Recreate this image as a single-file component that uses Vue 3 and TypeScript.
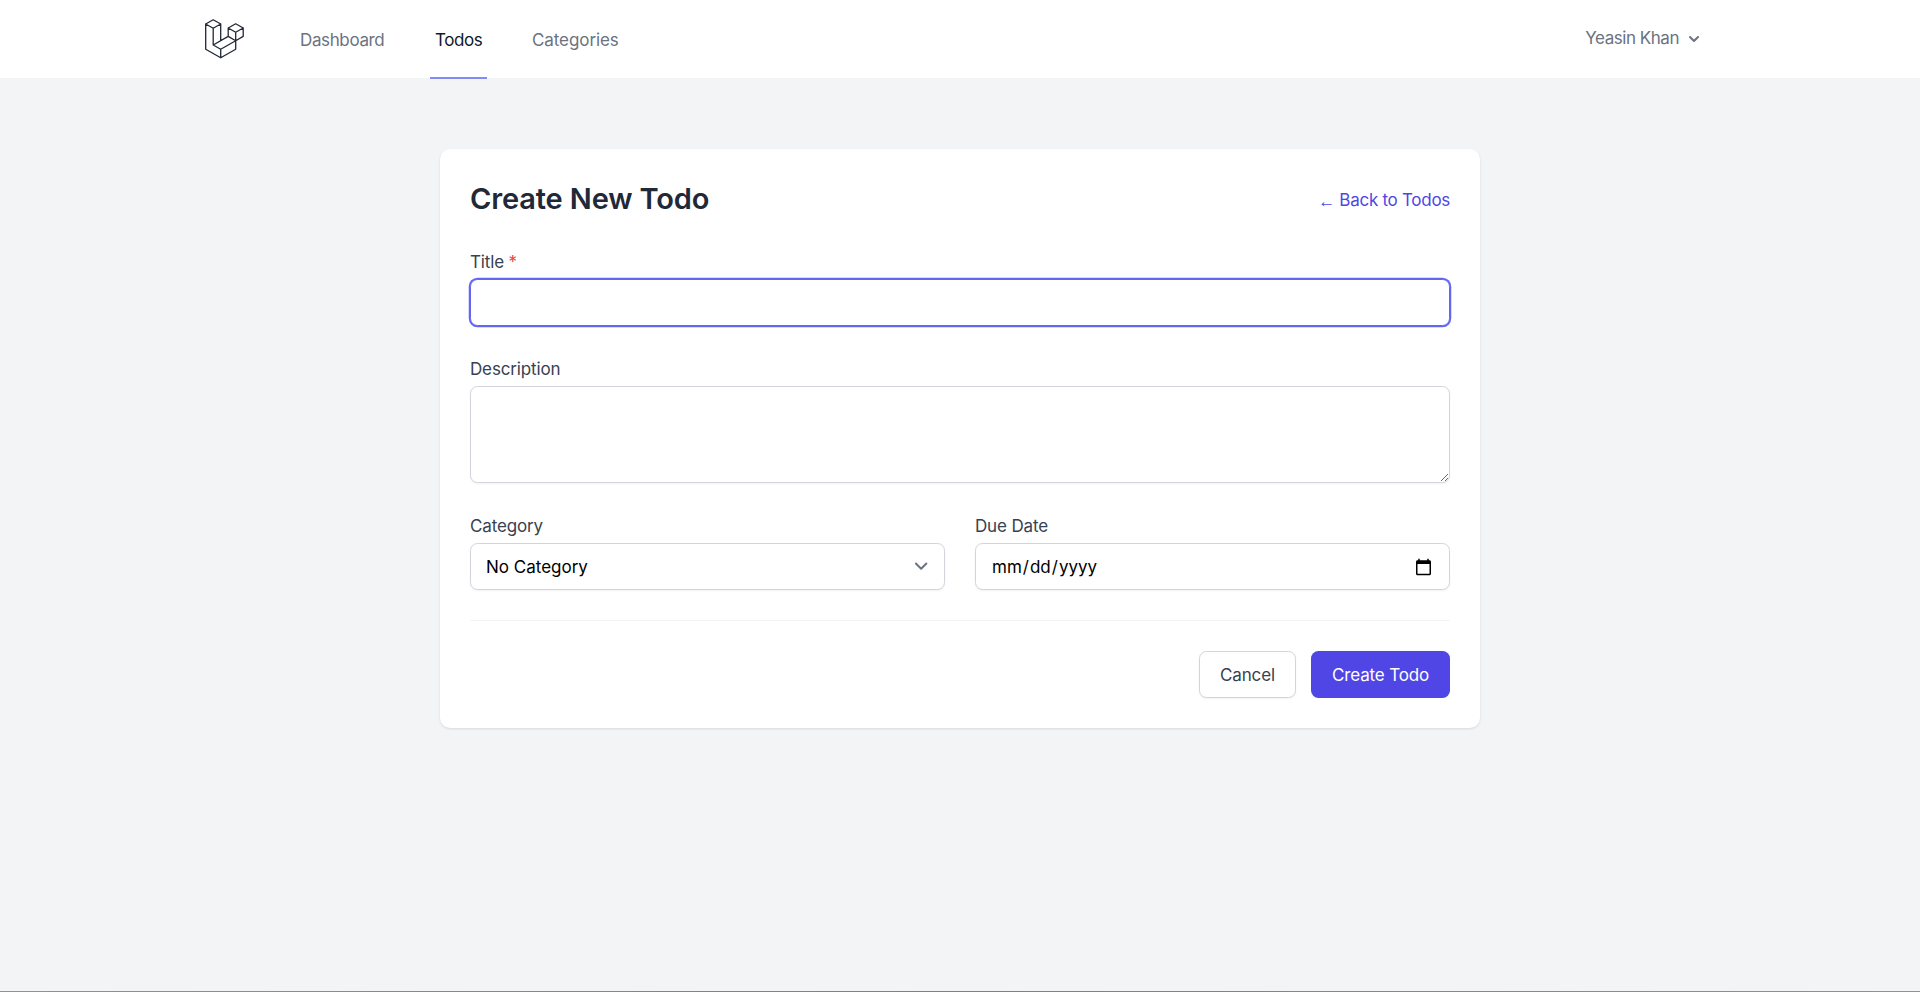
<script setup lang="ts">
import { ref } from 'vue'

interface NavLink {
  label: string
  key: string
  active: boolean
}

const links: NavLink[] = [
  { label: 'Dashboard', key: 'dashboard', active: false },
  { label: 'Todos', key: 'todos', active: true },
  { label: 'Categories', key: 'categories', active: false },
]

const title = ref('')
const description = ref('')
const category = ref('')
const dueDate = ref('')
</script>

<template>
  <div class="page">
    <nav class="nav">
      <div class="nav-left">
        <a class="logo" href="#">
          <svg width="40" height="40" viewBox="0 0 40 40" fill="none" stroke="#1f2937" stroke-width="1.3" stroke-linejoin="round" stroke-linecap="round">
            <path d="M8.2 0.8 15.7 5 8.2 9.2 0.7 5ZM0.7 5V30.2L15.7 38.8 30.7 30.2V21.8M8.2 9.2V26L15.7 30.2V38.8M15.7 30.2 30.7 21.8M15.7 5V21.8M8.2 26 23.2 17.4 30.7 21.8 38.2 17.4V9M23.2 17.4V9L30.7 4.8 38.2 9 30.7 13.2V21.8M23.2 9 30.7 13.2" />
          </svg>
        </a>
        <div class="links">
          <a v-for="link in links" :key="link.key" href="#" class="link" :class="[link.key, { active: link.active }]">{{ link.label }}</a>
        </div>
      </div>
      <button class="user" type="button">
        <span class="user-name">Yeasin Khan</span>
        <svg width="20" height="20" viewBox="0 0 20 20" fill="currentColor">
          <path fill-rule="evenodd" clip-rule="evenodd" d="M5.293 7.293a1 1 0 011.414 0L10 10.586l3.293-3.293a1 1 0 111.414 1.414l-4 4a1 1 0 01-1.414 0l-4-4a1 1 0 010-1.414z" />
        </svg>
      </button>
    </nav>

    <main class="card">
      <header class="card-head">
        <h2>Create New Todo</h2>
        <a href="#" class="back"><span class="arrow">←</span><span>Back to Todos</span></a>
      </header>

      <form class="form" @submit.prevent>
        <div class="field">
          <label for="title">Title <span class="required">*</span></label>
          <input id="title" v-model="title" class="control focused" type="text" />
        </div>
        <div class="field">
          <label for="description">Description</label>
          <textarea id="description" v-model="description" class="control area"></textarea>
        </div>
        <div class="pair">
          <div class="field">
            <label for="category">Category</label>
            <div class="select-wrap">
              <select id="category" v-model="category" class="control">
                <option value="">No Category</option>
              </select>
              <svg class="select-arrow" width="26.25" height="26.25" viewBox="0 0 20 20" fill="none" stroke="#6b7280" stroke-width="1.5" stroke-linecap="round" stroke-linejoin="round">
                <path d="M6 8l4 4 4-4" />
              </svg>
            </div>
          </div>
          <div class="field">
            <label for="due">Due Date</label>
            <input id="due" v-model="dueDate" class="control date" type="date" />
          </div>
        </div>
        <div class="actions">
          <button type="button" class="btn cancel">Cancel</button>
          <button type="submit" class="btn create">Create Todo</button>
        </div>
      </form>
    </main>
    <div class="edge"></div>
  </div>
</template>

<style>
body {
  margin: 0;
  background: #f3f4f6;
}
</style>

<style scoped>
* {
  box-sizing: border-box;
}
.page {
  height: 992px;
  display: flex;
  flex-direction: column;
  align-items: center;
  background: #f3f4f6;
  overflow: hidden;
  font-family: Inter, "Liberation Sans", sans-serif;
  font-size: 17px;
  line-height: 25px;
  color: #374151;
}
a {
  text-decoration: none;
  color: inherit;
}
.nav {
  width: 100%;
  height: 79px;
  flex: none;
  padding: 0 200px 0 205px;
  display: flex;
  justify-content: space-between;
  background: linear-gradient(#fff 78px, #f3f4f6 78px);
}
.nav-left {
  display: flex;
}
.logo {
  height: 40px;
  margin-top: 19px;
}
.logo svg {
  display: block;
}
.links {
  display: flex;
  gap: 40px;
  margin-left: 50px;
}
.link {
  padding: 28px 5px 0;
  border-bottom: 2px solid transparent;
  font-weight: 440;
  color: #6b7280;
  white-space: nowrap;
}
.link.dashboard {
  width: 95px;
  letter-spacing: -0.37px;
}
.link.todos {
  width: 57px;
  letter-spacing: -0.42px;
}
.link.categories {
  letter-spacing: -0.08px;
}
.link.active {
  color: #111827;
  border-bottom-color: #818cf8;
}
.user {
  height: 25px;
  margin: 26px 16px 0 0;
  padding: 0;
  border: 0;
  background: none;
  display: flex;
  align-items: center;
  gap: 5px;
  font: inherit;
  font-weight: 440;
  letter-spacing: -0.47px;
  color: #6b7280;
}
.card {
  width: 1040px;
  height: 579px;
  margin-top: 70px;
  padding: 30px;
  background: #fff;
  border-radius: 10px;
  box-shadow: 0 1px 3px rgba(0, 0, 0, 0.08), 0 1px 2px rgba(0, 0, 0, 0.04);
}
.card-head {
  display: flex;
  align-items: center;
  justify-content: space-between;
  height: 40px;
}
h2 {
  margin: 0;
  font-size: 29px;
  line-height: 40px;
  font-weight: 560;
  letter-spacing: -0.14px;
  color: #1f2937;
  white-space: nowrap;
}
.back {
  display: flex;
  padding-top: 2px;
  letter-spacing: -0.28px;
  color: #4f46e5;
}
.arrow {
  width: 21px;
  font-family: "Liberation Sans", sans-serif;
  font-size: 17px;
  line-height: 27px;
  height: 25px;
}
.form {
  display: flex;
  flex-direction: column;
  gap: 30px;
  margin-top: 30px;
}
.field {
  display: flex;
  flex-direction: column;
  gap: 5px;
  min-width: 0;
}
label {
  height: 25px;
  padding-top: 1px;
  font-weight: 440;
  letter-spacing: -0.15px;
  white-space: nowrap;
}
.required {
  color: #ef4444;
}
.control {
  width: 100%;
  height: 47px;
  margin: 0;
  padding: 10px 15px;
  border: 1px solid #d1d5db;
  border-radius: 7.5px;
  background: #fff;
  box-shadow: 0 1px 2px rgba(0, 0, 0, 0.05);
  font: inherit;
  color: #000;
  appearance: none;
  outline: none;
}
select.control {
  padding-top: 11px;
  padding-bottom: 9px;
}
.focused {
  border-color: #6366f1;
  box-shadow: 0 0 0 1.25px #6366f1;
}
.area {
  display: block;
  height: 97px;
  resize: vertical;
}
input.date {
  padding-top: 11px;
  padding-bottom: 9px;
}
.date::-webkit-calendar-picker-indicator {
  width: 19px;
  height: 19px;
  padding: 0;
  margin-right: 1.5px;
}
.pair {
  display: grid;
  grid-template-columns: 1fr 1fr;
  gap: 30px;
}
.select-wrap {
  position: relative;
  height: 47px;
}
.select-arrow {
  position: absolute;
  right: 11px;
  top: 9.5px;
  pointer-events: none;
}
.actions {
  display: flex;
  justify-content: flex-end;
  gap: 15px;
  padding-top: 30px;
  border-top: 1px solid #f3f4f6;
}
.btn {
  height: 47px;
  padding: 1px 0 0;
  border-radius: 7.5px;
  font: inherit;
  font-weight: 440;
  letter-spacing: -0.15px;
  white-space: nowrap;
}
.cancel {
  width: 97px;
  border: 1px solid #d1d5db;
  background: #fff;
  color: #374151;
  box-shadow: 0 1px 2px rgba(0, 0, 0, 0.05);
}
.create {
  width: 139px;
  border: 0;
  background: #4f46e5;
  color: #fff;
}
.edge {
  width: 100%;
  height: 1px;
  margin-top: auto;
  background: linear-gradient(90deg, #7f9a94, #4f968c 50%, #7f9a94);
}
</style>
